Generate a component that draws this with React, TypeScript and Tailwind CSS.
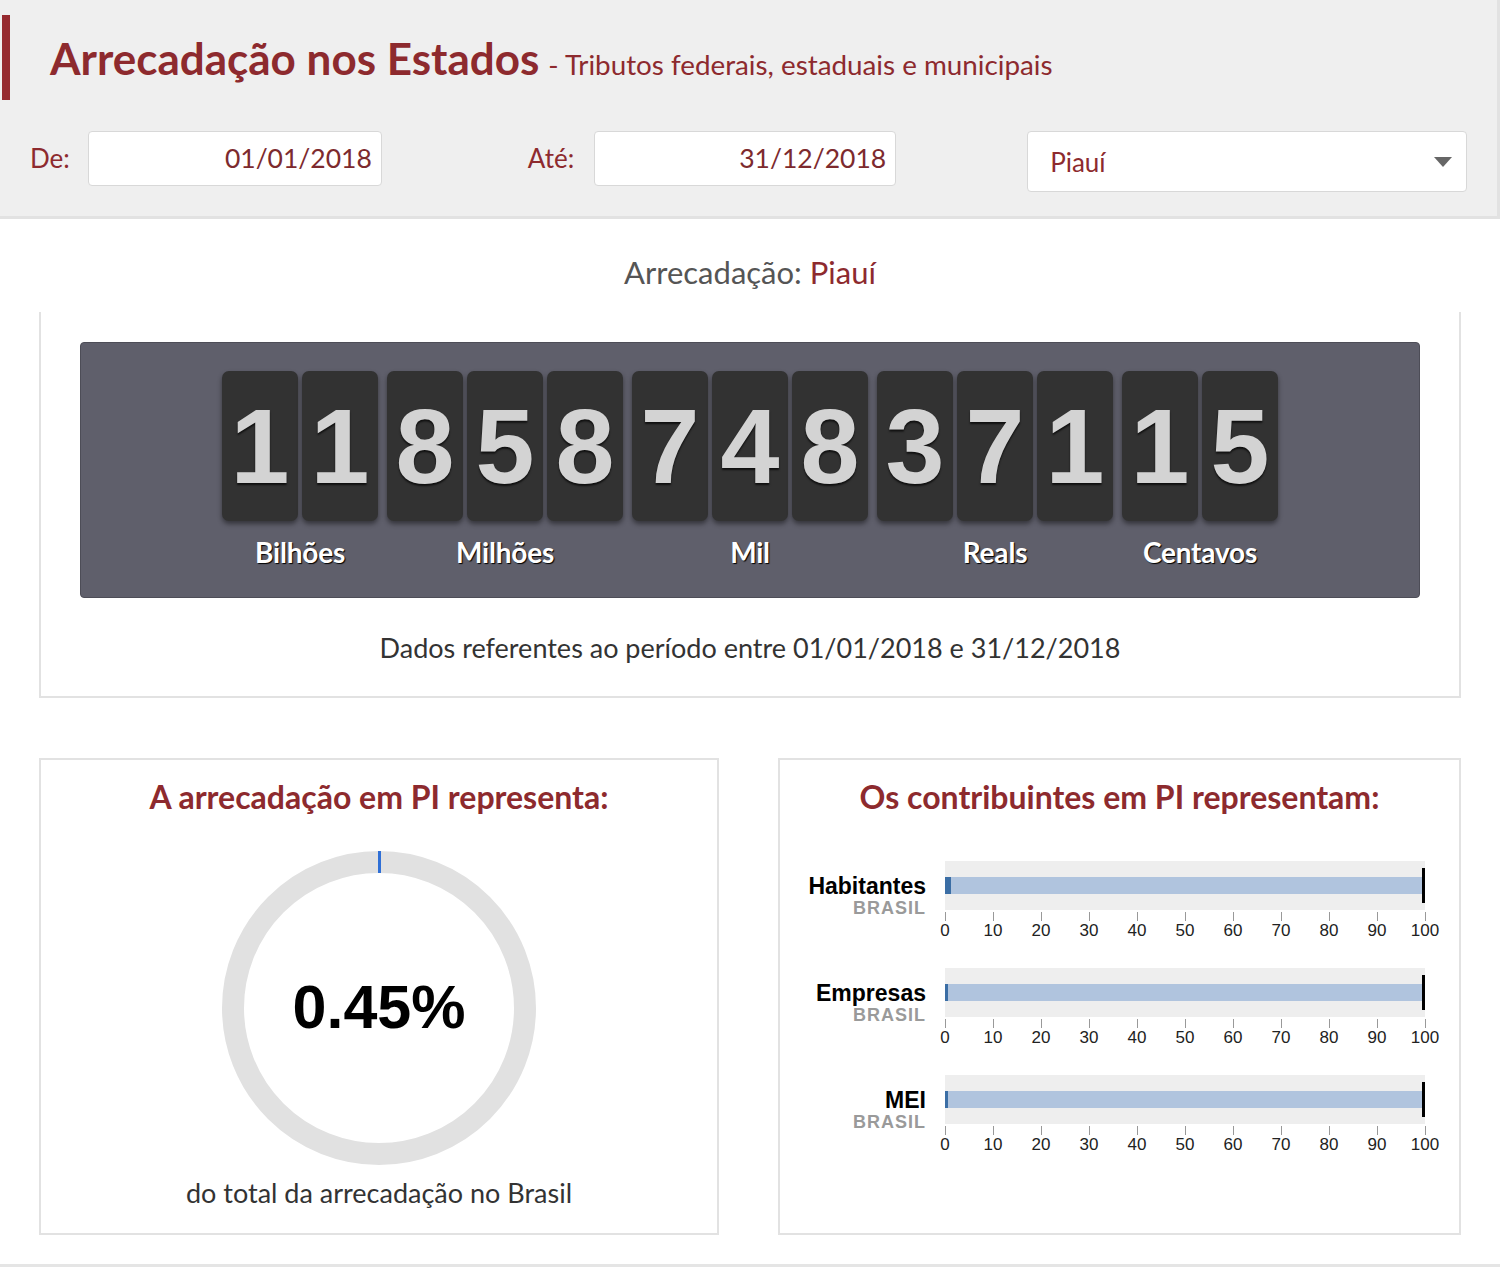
import React from "react";

const RED = "#8d2a2e";

const groups: { digits: string[]; label: string }[] = [
  { digits: ["1", "1"], label: "Bilhões" },
  { digits: ["8", "5", "8"], label: "Milhões" },
  { digits: ["7", "4", "8"], label: "Mil" },
  { digits: ["3", "7", "1"], label: "Reals" },
  { digits: ["1", "5"], label: "Centavos" },
];

function Bullet({ label, seg }: { label: string; seg: number }) {
  const ticks = [0, 10, 20, 30, 40, 50, 60, 70, 80, 90, 100];
  return (
    <div className="flex h-[107px]">
      <div className="w-[146px] pt-[14px] text-right font-['Liberation_Sans',Arial,sans-serif]">
        <div className="text-[23px] leading-[22px] font-bold text-black">{label}</div>
        <div className="mt-[2px] text-[18px] leading-[18px] font-bold tracking-[1px] text-[#9a9a9a]">BRASIL</div>
      </div>
      <svg width="510" height="107" className="ml-[19px] shrink-0" style={{ overflow: "visible" }}>
        <rect x="0" y="0" width="480" height="49" fill="#eeeeee" />
        <rect x="0" y="16" width="478" height="17" fill="#b0c4de" />
        <rect x="0" y="16" width={seg} height="17" fill="#3b6ea5" />
        <rect x="477" y="7" width="3" height="35" fill="#000" />
        {ticks.map((t, i) => (
          <g key={t}>
            <line x1={i * 48 + 0.5} x2={i * 48 + 0.5} y1="51" y2="60" stroke="#999" strokeWidth="1" />
            <text
              x={i * 48}
              y="75"
              textAnchor="middle"
              fontFamily="Liberation Sans, Arial, sans-serif"
              fontSize="17"
              fill="#222"
            >
              {t}
            </text>
          </g>
        ))}
      </svg>
    </div>
  );
}

export default function App() {
  return (
    <div className="w-[1500px] h-[1268px] bg-white font-['Lato',sans-serif] overflow-hidden">
      {/* Header */}
      <div className="h-[219px] bg-[#efefef] border-b-[3px] border-r-[3px] border-[#e2e2e2] pt-[15px]">
        <div className="flex h-[85px] items-center">
          <div className="ml-[2px] h-full w-[8px] bg-[#962a2f]" />
          <div className="ml-[40px] flex items-baseline">
            <span className="text-[44px] font-bold leading-none" style={{ color: RED }}>
              Arrecadação nos Estados
            </span>
            <span className="ml-[9px] text-[27.8px] leading-none" style={{ color: RED }}>
              - Tributos federais, estaduais e municipais
            </span>
          </div>
        </div>
        <div className="mt-[31px] flex items-start">
          <div className="ml-[30px] flex h-[55px] items-center text-[26px]" style={{ color: RED }}>
            De:
          </div>
          <div
            className="ml-[18px] flex h-[55px] w-[294px] items-center justify-end rounded-[4px] border border-[#d8d8d8] bg-white pr-[9px] text-[26.5px]"
            style={{ color: "#7d2a2e" }}
          >
            01/01/2018
          </div>
          <div className="ml-[146px] flex h-[55px] items-center text-[26px]" style={{ color: RED }}>
            Até:
          </div>
          <div
            className="ml-[20px] flex h-[55px] w-[302px] items-center justify-end rounded-[4px] border border-[#d8d8d8] bg-white pr-[9px] text-[26.5px]"
            style={{ color: "#7d2a2e" }}
          >
            31/12/2018
          </div>
          <div className="ml-[131px] flex h-[61px] w-[440px] items-center justify-between rounded-[4px] border border-[#d8d8d8] bg-white pl-[22px] pr-[14px] text-[26px]">
            <span className="mt-[2px]" style={{ color: RED }}>Piauí</span>
            <svg width="18" height="10" viewBox="0 0 18 10">
              <path d="M0 0 L18 0 L9 10 Z" fill="#666" />
            </svg>
          </div>
        </div>
      </div>

      {/* Arrecadação title */}
      <div className="pt-[37px] text-center text-[31px] leading-[32px] text-[#555]">
        Arrecadação: <span style={{ color: RED }}>Piauí</span>
      </div>

      {/* Counter box */}
      <div className="mx-[39px] mt-[24px] border-x-2 border-b-2 border-[#e2e2e2] pt-[30px] pb-[32px]">
        <div className="mx-[39px] h-[256px] rounded-[4px] border border-[#4d4d57] bg-[#5f5f6b] pt-[28px]">
          <div className="flex justify-center gap-[9px]">
            {groups.map((g) => (
              <div key={g.label} className="flex flex-col items-center">
                <div className="flex gap-[4px]">
                  {g.digits.map((d, i) => (
                    <div
                      key={i}
                      className="flex h-[150px] w-[76px] items-center justify-center rounded-[7px] bg-[#323232] shadow-[0_3px_5px_rgba(0,0,0,0.45)]"
                    >
                      <span className="font-['Liberation_Sans',Arial,sans-serif] text-[106px] font-bold leading-none text-[#d3d3d3] [text-shadow:0_2px_2px_rgba(0,0,0,0.7)]">
                        {d}
                      </span>
                    </div>
                  ))}
                </div>
                <div className="mt-[15px] text-[28px] font-bold leading-[32px] tracking-[-0.2px] text-white [text-shadow:1px_1px_1px_#000]">
                  {g.label}
                </div>
              </div>
            ))}
          </div>
        </div>
        <div className="mt-[34px] text-center text-[27px] leading-[32px] text-[#333]">
          Dados referentes ao período entre 01/01/2018 e 31/12/2018
        </div>
      </div>

      {/* Bottom boxes */}
      <div className="mx-[39px] mt-[60px] flex justify-between">
        <div className="h-[477px] w-[680px] border-2 border-[#e2e2e2] pt-[18px]">
          <div className="text-center text-[32px] font-bold leading-[38px]" style={{ color: RED }}>
            A arrecadação em PI representa:
          </div>
          <div className="relative mx-auto mt-[34px] h-[316px] w-[316px]">
            <svg width="316" height="316" viewBox="0 0 316 316">
              <circle cx="158" cy="158" r="146" fill="none" stroke="#e1e1e1" strokeWidth="22" />
              <rect x="157" y="1" width="3" height="22" fill="#2f6fd6" />
            </svg>
            <div className="absolute inset-0 flex items-center justify-center font-['Liberation_Sans',Arial,sans-serif] text-[61px] font-bold text-black">
              0.45%
            </div>
          </div>
          <div className="mt-[11px] text-center text-[27px] leading-[32px] text-[#333]">
            do total da arrecadação no Brasil
          </div>
        </div>
        <div className="h-[477px] w-[683px] border-2 border-[#e2e2e2] pt-[18px]">
          <div className="text-center text-[32px] font-bold leading-[38px]" style={{ color: RED }}>
            Os contribuintes em PI representam:
          </div>
          <div className="mt-[45px]">
            <Bullet label="Habitantes" seg={6} />
            <Bullet label="Empresas" seg={3} />
            <Bullet label="MEI" seg={3} />
          </div>
        </div>
      </div>

      <div className="mt-[29px] border-t-[3px] border-[#e5e5e5]" />
    </div>
  );
}
